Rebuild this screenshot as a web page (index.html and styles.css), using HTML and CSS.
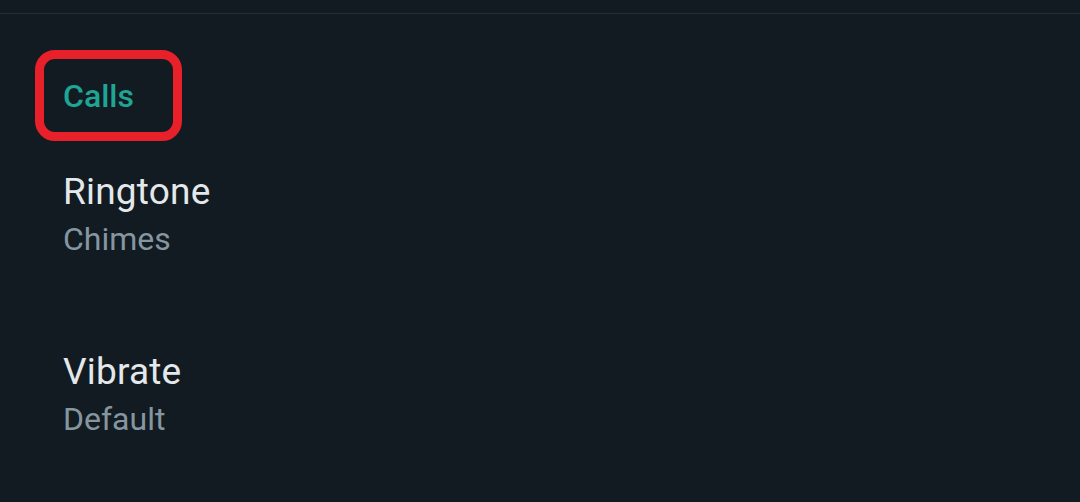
FILE: index.html
```html
<!DOCTYPE html>
<html>
<head>
<meta charset="utf-8">
<link rel="stylesheet" href="styles.css">
</head>
<body>
<div class="topbar"></div>
<section class="section">
  <div class="section-head">
    <h2 class="section-title">Calls</h2>
    <span class="highlight"></span>
  </div>
  <div class="item">
    <div class="item-title">Ringtone</div>
    <div class="item-sub">Chimes</div>
  </div>
  <div class="item">
    <div class="item-title">Vibrate</div>
    <div class="item-sub">Default</div>
  </div>
</section>
</body>
</html>
```
FILE: styles.css
```css
html, body {
  margin: 0;
  padding: 0;
}
body {
  background: #111b21;
  width: 1080px;
  height: 502px;
  overflow: hidden;
  font-family: Roboto, "Liberation Sans", sans-serif;
}
.topbar {
  height: 13px;
  border-bottom: 1px solid #222d34;
}
.section {
  padding-left: 63px;
}
.section-head {
  position: relative;
  margin-top: 62px;
}
.section-title {
  margin: 0;
  font-size: 32px;
  line-height: 40px;
  font-weight: 500;
  color: #1fa594;
}
.highlight {
  position: absolute;
  left: -28px;
  top: -26px;
  width: 147px;
  height: 91px;
  box-sizing: border-box;
  border: 9px solid #e8202a;
  border-radius: 20px;
}
.item {
  padding: 54px 0 0;
}
.item + .item {
  padding-top: 86px;
}
.item-title {
  font-size: 37px;
  line-height: 44px;
  letter-spacing: 0.2px;
  color: #e4e8ea;
}
.item-sub {
  font-size: 32px;
  line-height: 50px;
  color: #8696a0;
}
```
